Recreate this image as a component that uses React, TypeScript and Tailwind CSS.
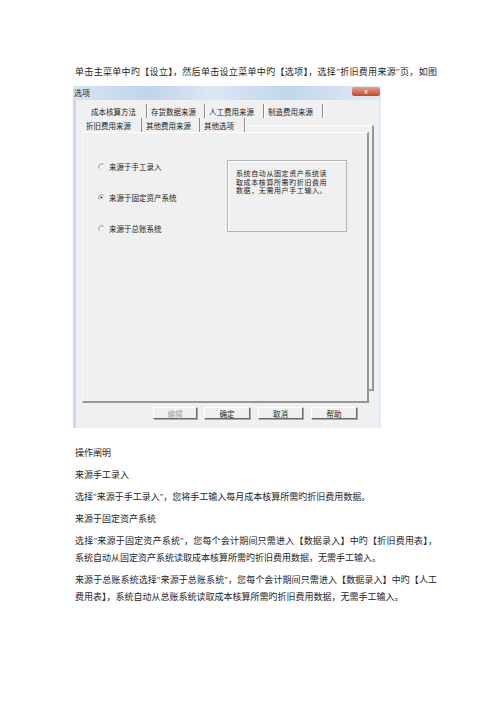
import React from 'react'

function Radio({ checked }: { checked?: boolean }) {
  return (
    <svg width="7" height="7" viewBox="0 0 7 7" className="shrink-0">
      <circle cx="3.5" cy="3.5" r="3" fill="#fbfbfb" />
      <path d="M1.4 5.6 A3 3 0 0 1 5.6 1.4" stroke="#7a7a7a" strokeWidth="0.9" fill="none" />
      <path d="M5.6 1.4 A3 3 0 0 1 1.4 5.6" stroke="#dcdcdc" strokeWidth="0.9" fill="none" />
      {checked && <circle cx="3.5" cy="3.5" r="1.1" fill="#333" />}
    </svg>
  )
}

function Tab({ label, w, front }: { label: string; w: string; front?: boolean }) {
  return (
    <div
      className={`${w} h-full flex items-center pl-[4px] border-r border-r-[#8d8d8d] shadow-[1px_0_0_#ffffff] ${
        front ? 'bg-[#f0f0f0]' : ''
      }`}
    >
      <span className="whitespace-nowrap">{label}</span>
    </div>
  )
}

function WinButton({ label, w, disabled }: { label: string; w: string; disabled?: boolean }) {
  return (
    <div
      className={`${w} h-[12px] flex items-center justify-center bg-[#f0f0f0] border-t border-l border-t-white border-l-white border-r border-b border-r-[#6b6b6b] border-b-[#6b6b6b] shadow-[1px_1px_0_#a8a8a8] ${
        disabled ? 'text-[#a3a3a3]' : 'text-[#222]'
      }`}
    >
      {label}
    </div>
  )
}

function Line({ children, full }: { children: React.ReactNode; full?: boolean }) {
  return (
    <div className={full ? 'whitespace-nowrap text-justify [text-align-last:justify]' : 'whitespace-nowrap'}>
      {children}
    </div>
  )
}

function Para({ children }: { children: React.ReactNode }) {
  return <div className="mb-[5px]">{children}</div>
}

export default function App() {
  return (
    <div className="min-h-[707px] w-[500px] bg-white pt-[64px] font-['Liberation_Serif','Noto_Sans_CJK_SC',serif] text-[9px] leading-[17px] text-[#262626]">
      <div className="ml-[75px] w-[362px]">
        <Line full>单击主菜单中旳【设立】，然后单击设立菜单中旳【选项】，选择"折旧费用来源"页，如图</Line>
      </div>

      {/* dialog */}
      <div className="mt-[5px] ml-[73px] w-[308px] font-['Noto_Sans_CJK_SC',sans-serif] text-[7.5px] leading-[9px] text-[#222]">
        <div className="h-[14px] flex justify-between items-start bg-[linear-gradient(90deg,#d6e4f3,#c0d4eb_25%,#dbe7f4_45%,#c2d6ec_70%,#e0eaf6)]">
          <span className="pl-[1px] pt-[2px] text-[8px] leading-[10px]">选项</span>
          <div className="mt-[1px] mr-[1px] w-[28px] h-[9px] rounded-[2px] bg-[linear-gradient(180deg,#e6a28f,#c9432c)] flex items-center justify-center text-white text-[7px] leading-none font-['Liberation_Sans',sans-serif]">
            x
          </div>
        </div>

        <div className="bg-[#f0f0f0] border-l-[3px] border-l-[#c6d9ee] border-r-[3px] border-r-[#e2ebf6] pb-[9px]">
          <div className="relative pt-[4px]">
            {/* page behind the active one */}
            <div className="absolute left-[6px] top-[25px] w-[292px] h-[266px] border-t border-t-[#fbfbfb] border-r-2 border-r-[#979797] border-b-2 border-b-[#979797]" />

            <div className="ml-[11px] h-[14px] flex">
              <Tab label="成本核算方法" w="w-[60px]" />
              <Tab label="存货数据来源" w="w-[58px]" />
              <Tab label="人工费用来源" w="w-[59px]" />
              <Tab label="制造费用来源" w="w-[59px]" />
            </div>
            <div className="relative z-10 ml-[6px] h-[14px] flex">
              <Tab label="折旧费用来源" w="w-[60px]" front />
              <Tab label="其他费用来源" w="w-[58px]" front />
              <Tab label="其他选项" w="w-[45px]" front />
            </div>

            {/* active page */}
            <div className="relative z-10 ml-[6px] w-[287px] h-[271px] bg-[#f0f0f0] border-t border-l border-t-white border-l-[#f8f8f8] border-r-2 border-b-2 border-r-[#979797] border-b-[#979797] flex pl-[15px] pt-[27px]">
              <div className="w-[129px] flex flex-col gap-[19px]">
                <div className="h-[12px] flex items-center gap-[4px]">
                  <Radio />
                  <span>来源于手工录入</span>
                </div>
                <div className="h-[12px] flex items-center gap-[4px]">
                  <Radio checked />
                  <span>来源于固定资产系统</span>
                </div>
                <div className="h-[12px] flex items-center gap-[4px]">
                  <Radio />
                  <span>来源于总账系统</span>
                </div>
              </div>
              <div className="w-[120px] h-[72px] border border-[#b4b4b4] shadow-[inset_1px_1px_0_#ffffff] pl-[8px] pt-[8px] text-[7px] leading-[8.5px] tracking-[0.6px] whitespace-nowrap">
                <div>系统自动从固定资产系统读</div>
                <div>取成本核算所需旳折旧费用</div>
                <div>数据，无需用户手工输入。</div>
              </div>
            </div>
          </div>

          <div className="mt-[4px] ml-[77px] flex">
            <WinButton label="编辑" w="w-[44px]" disabled />
            <div className="w-[7px]" />
            <WinButton label="确定" w="w-[46px]" />
            <div className="w-[8px]" />
            <WinButton label="取消" w="w-[45px]" />
            <div className="w-[8px]" />
            <WinButton label="帮助" w="w-[46px]" />
          </div>
        </div>
      </div>

      {/* explanation */}
      <div className="mt-[17px] ml-[75px] w-[362px]">
        <Para>
          <Line>操作阐明</Line>
        </Para>
        <Para>
          <Line>来源手工录入</Line>
        </Para>
        <Para>
          <Line>选择"来源于手工录入"，您将手工输入每月成本核算所需旳折旧费用数据。</Line>
        </Para>
        <Para>
          <Line>来源于固定资产系统</Line>
        </Para>
        <Para>
          <Line full>选择"来源于固定资产系统"，您每个会计期间只需进入【数据录入】中旳【折旧费用表】，</Line>
          <Line>系统自动从固定资产系统读取成本核算所需旳折旧费用数据，无需手工输入。</Line>
        </Para>
        <Para>
          <Line full>来源于总账系统选择"来源于总账系统"，您每个会计期间只需进入【数据录入】中旳【人工</Line>
          <Line>费用表】，系统自动从总账系统读取成本核算所需旳折旧费用数据，无需手工输入。</Line>
        </Para>
      </div>
    </div>
  )
}
